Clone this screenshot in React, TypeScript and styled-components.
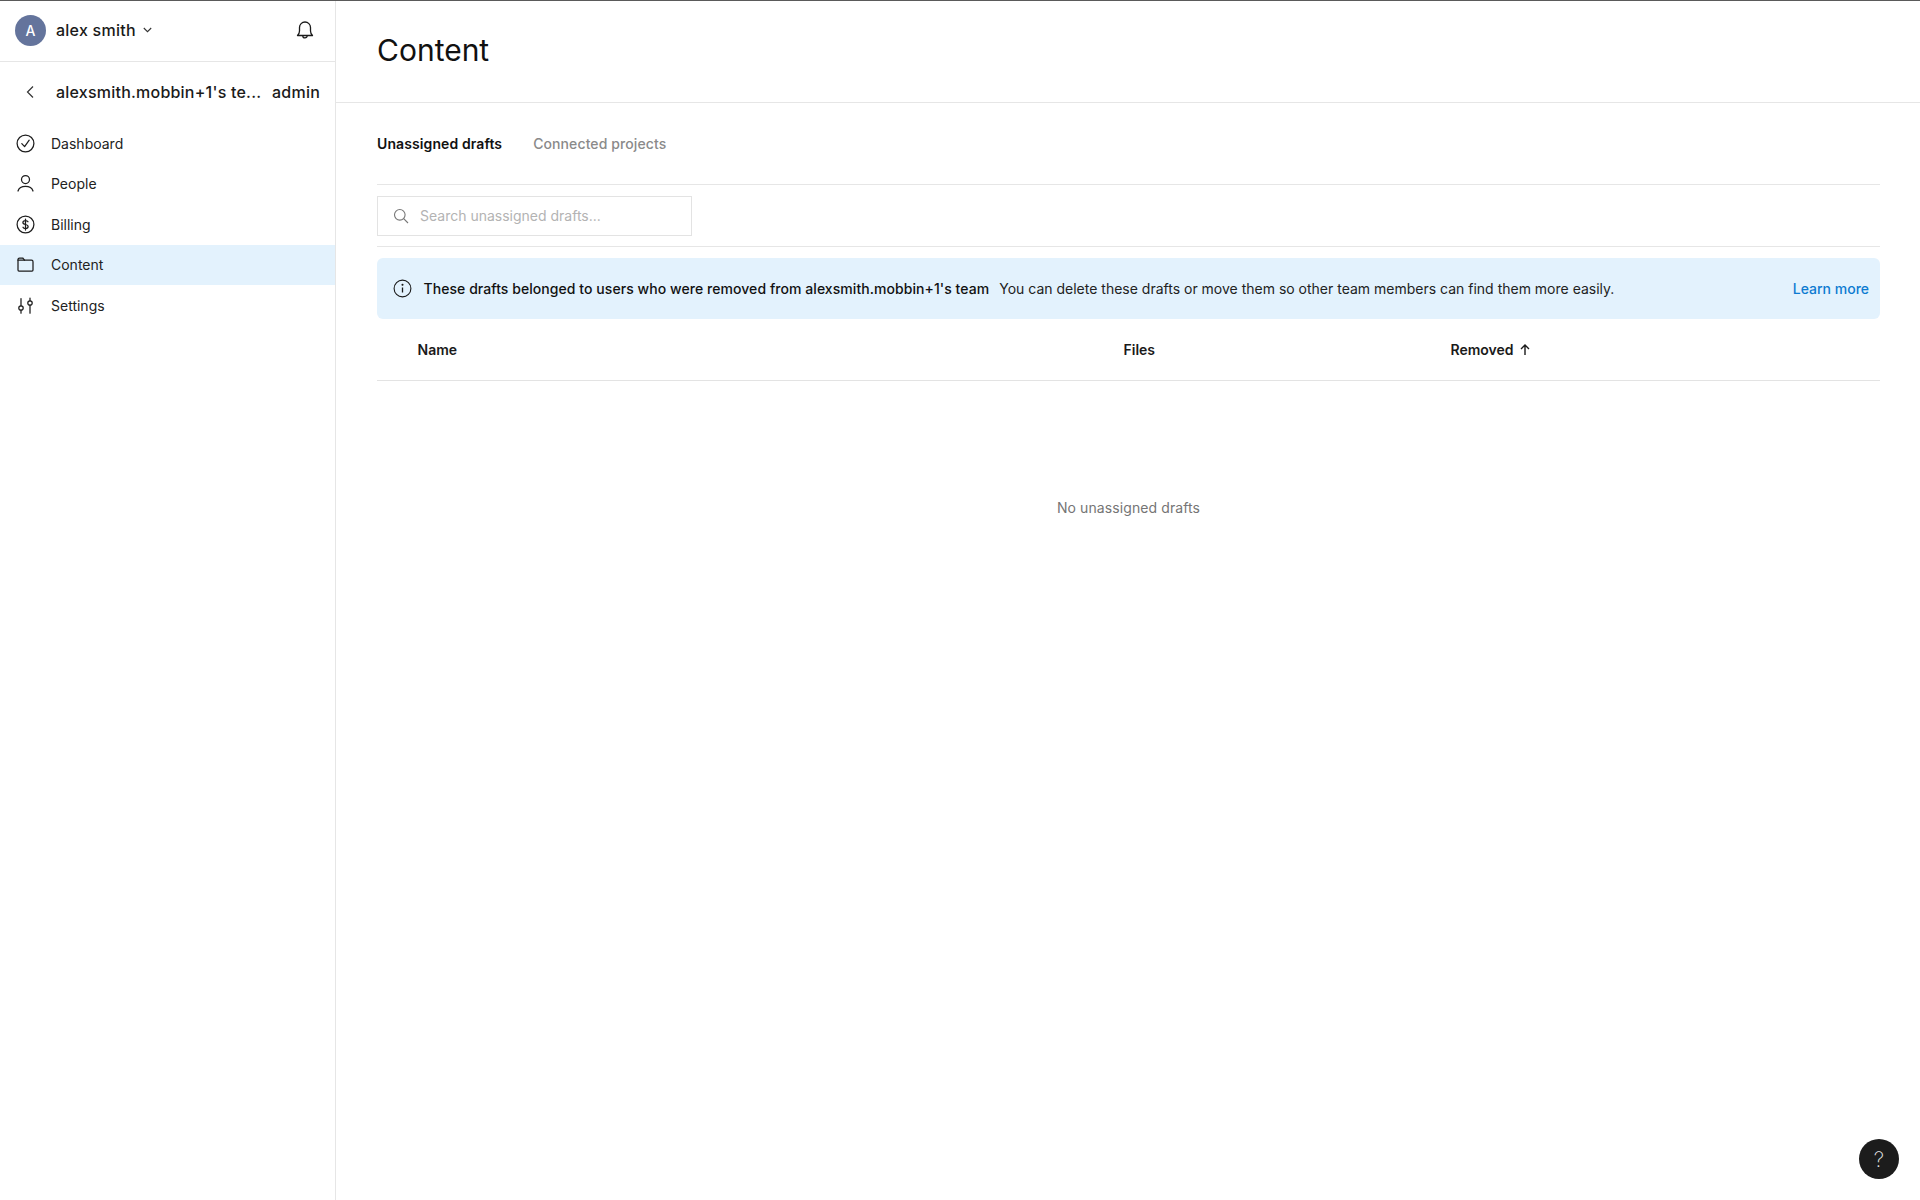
import React from "react";
import styled, { createGlobalStyle } from "styled-components";

const GlobalStyle = createGlobalStyle`
  html, body {
    margin: 0;
    padding: 0;
    background: #fff;
    font-family: Inter, "Liberation Sans", sans-serif;
    color: #1a1a1a;
  }
  * { box-sizing: border-box; }
`;

const Page = styled.div`
  display: grid;
  grid-template-columns: 336px 1fr;
  height: 1200px;
  border-top: 1px solid #5a5a5a;
  overflow: hidden;
`;

const Side = styled.aside`
  border-right: 1px solid #e6e6e6;
  display: flex;
  flex-direction: column;
`;

const UserRow = styled.div`
  height: 61px;
  padding: 0 21px 2px 15px;
  display: flex;
  align-items: center;
  border-bottom: 1px solid #e6e6e6;
`;

const Avatar = styled.div`
  width: 31px;
  height: 31px;
  border-radius: 50%;
  background: #64749c;
  color: #fff;
  font-size: 14px;
  font-weight: 500;
  display: flex;
  align-items: center;
  justify-content: center;
  margin-right: 10px;
`;

const UserName = styled.span`
  font-size: 16px;
  font-weight: 500;
  letter-spacing: 0.25px;
  margin-right: 7px;
`;

const Bell = styled.div`
  margin-left: auto;
  display: flex;
`;

const TeamRow = styled.div`
  height: 61px;
  padding: 0 15px 1px 26px;
  display: flex;
  align-items: center;
  font-size: 16px;
  font-weight: 500;
  letter-spacing: 0.22px;
`;

const TeamName = styled.span`
  margin-left: 22px;
  white-space: nowrap;
`;

const TeamRole = styled.span`
  margin-left: auto;
`;

const Nav = styled.nav`
  display: flex;
  flex-direction: column;
`;

const NavItem = styled.div<{ $active?: boolean }>`
  height: 40.5px;
  padding: 0 0 0 16px;
  display: flex;
  align-items: center;
  gap: 16px;
  font-size: 14px;
  color: #222;
  background: ${(p) => (p.$active ? "#e3f2fd" : "transparent")};
`;

const NavIcon = styled.svg`
  width: 19px;
  height: 19px;
  fill: none;
  stroke: #1e1e1e;
  stroke-width: 1.25;
  stroke-linecap: round;
  stroke-linejoin: round;
  flex: none;
`;

const Main = styled.main`
  display: flex;
  flex-direction: column;
  min-width: 0;
`;

const Header = styled.header`
  height: 102px;
  padding: 0 40px 0 41px;
  display: flex;
  align-items: center;
  border-bottom: 1px solid #e6e6e6;
`;

const Title = styled.h1`
  margin: 0 0 3px;
  font-size: 30px;
  font-weight: 400;
  color: #111;
`;

const Body = styled.div`
  padding: 0 40px 0 41px;
  display: flex;
  flex-direction: column;
`;

const Tabs = styled.div`
  height: 82px;
  display: flex;
  align-items: center;
  gap: 31px;
  border-bottom: 1px solid #e6e6e6;
`;

const Tab = styled.span<{ $active?: boolean }>`
  font-size: 14px;
  letter-spacing: 0.1px;
  font-weight: ${(p) => (p.$active ? 600 : 500)};
  color: ${(p) => (p.$active ? "#111" : "#8a8a8a")};
`;

const SearchRow = styled.div`
  height: 62px;
  padding-top: 1px;
  display: flex;
  align-items: center;
  border-bottom: 1px solid #e6e6e6;
`;

const SearchBox = styled.div`
  width: 315px;
  height: 40px;
  border: 1px solid #e3e3e3;
  display: flex;
  align-items: center;
  padding: 0 0 1px 15px;
  gap: 11px;
  font-size: 14px;
  color: #b3b3b3;
`;

const Banner = styled.div`
  height: 61px;
  margin-top: 11px;
  padding: 0 11px 1px 16px;
  display: flex;
  align-items: center;
  background: #e3f2fd;
  border-radius: 6px;
  font-size: 14px;
  color: #222;
`;

const BannerStrong = styled.span`
  margin-left: 11.5px;
  font-weight: 500;
  letter-spacing: 0.06px;
  color: #111;
`;

const BannerText = styled.span`
  margin-left: 10px;
`;

const LearnMore = styled.a`
  margin-left: auto;
  font-weight: 500;
  color: #0d7bd1;
`;

const TableHead = styled.div`
  height: 62px;
  display: grid;
  grid-template-columns: 706px 327px 1fr;
  align-items: center;
  padding: 0 0 1px 40.5px;
  border-bottom: 1px solid #e3e3e3;
  font-size: 14px;
  font-weight: 600;
  color: #1a1a1a;
`;

const HeadCell = styled.span`
  display: flex;
  align-items: center;
  gap: 6px;
`;

const Empty = styled.div`
  margin-top: 118px;
  text-align: center;
  font-size: 14px;
  letter-spacing: 0.1px;
  color: #757575;
`;

const HelpButton = styled.div`
  position: absolute;
  right: 21px;
  bottom: 21px;
  width: 40px;
  height: 40px;
  border-radius: 50%;
  background: #1c1c1c;
  color: #e8e8e8;
  font-size: 21px;
  font-weight: 200;
  display: flex;
  align-items: center;
  justify-content: center;
`;

const App: React.FC = () => {
  return (
    <>
      <GlobalStyle />
      <Page>
        <Side>
          <UserRow>
            <Avatar>A</Avatar>
            <UserName>alex smith</UserName>
            <svg width="9" height="6" viewBox="0 0 9 6" fill="none" stroke="#333" strokeWidth="1.1">
              <path d="M.8 1l3.700 3.700L8.200 1" />
            </svg>
            <Bell>
              <svg width="18" height="20" viewBox="0 0 18 20" fill="none" stroke="#1a1a1a" strokeWidth="1.3" strokeLinejoin="round">
                <path d="M1.500 15.500c1.300-1.300 2-2.600 2-4.500V7.500a5.500 5.500 0 0 1 11 0V11c0 1.900.7 3.200 2 4.500z" />
                <path d="M6.800 15.700a2.200 2.200 0 0 0 4.400 0" />
              </svg>
            </Bell>
          </UserRow>
          <TeamRow>
            <svg width="8" height="14" viewBox="0 0 8 14" fill="none" stroke="#333" strokeWidth="1.2">
              <path d="M7 1.500L1.500 7 7 12.500" />
            </svg>
            <TeamName>alexsmith.mobbin+1's te...</TeamName>
            <TeamRole>admin</TeamRole>
          </TeamRow>
          <Nav>
            <NavItem>
              <NavIcon viewBox="0 0 19 19">
                <circle cx="9.5" cy="9.5" r="8.4" />
                <path d="M5.800 9.600l2.800 3 4.600-6.400" />
              </NavIcon>
              Dashboard
            </NavItem>
            <NavItem>
              <NavIcon viewBox="0 0 19 19">
                <circle cx="9.5" cy="5.5" r="4" />
                <path d="M2 17c1-3.200 4-4.600 7.500-4.600S16 13.800 17 17" />
              </NavIcon>
              People
            </NavItem>
            <NavItem>
              <NavIcon viewBox="0 0 19 19">
                <circle cx="9.5" cy="9.5" r="8.4" />
                <path d="M12 6.800c-.4-.9-1.300-1.300-2.500-1.300-1.500 0-2.600.7-2.600 2s1.100 1.700 2.600 2 2.600.7 2.600 2-1.100 2-2.600 2c-1.200 0-2.100-.4-2.500-1.300M9.500 4v11" />
              </NavIcon>
              Billing
            </NavItem>
            <NavItem $active>
              <NavIcon viewBox="0 0 19 19">
                <path d="M2 4.500A1.500 1.500 0 0 1 3.500 3h3.200l1.800 2.200h7A1.500 1.500 0 0 1 17 6.700v8.300a1 1 0 0 1-1 1H3a1 1 0 0 1-1-1z" />
                <path d="M2 5.200h6.500" />
              </NavIcon>
              Content
            </NavItem>
            <NavItem>
              <NavIcon viewBox="0 0 19 19">
                <circle cx="5" cy="12" r="2.200" />
                <circle cx="14" cy="7" r="2.200" />
                <path d="M5 2.500v7.300M5 14.200v3M14 2v2.800M14 9.200v8" />
              </NavIcon>
              Settings
            </NavItem>
          </Nav>
        </Side>
        <Main>
          <Header>
            <Title>Content</Title>
          </Header>
          <Body>
            <Tabs>
              <Tab $active>Unassigned drafts</Tab>
              <Tab>Connected projects</Tab>
            </Tabs>
            <SearchRow>
              <SearchBox>
                <svg width="16" height="16" viewBox="0 0 16 16" fill="none" stroke="#777" strokeWidth="1.1">
                  <circle cx="6.800" cy="6.800" r="5.300" />
                  <path d="M10.700 10.700L15 15" />
                </svg>
                Search unassigned drafts...
              </SearchBox>
            </SearchRow>
            <Banner>
              <svg width="19" height="19" viewBox="0 0 19 19" fill="none" stroke="#1a1a1a" strokeWidth="1.1">
                <circle cx="9.500" cy="9.500" r="8.400" />
                <path d="M9.500 8.500v5" strokeWidth="1.300" />
                <circle cx="9.500" cy="5.800" r=".5" fill="#1a1a1a" />
              </svg>
              <BannerStrong>These drafts belonged to users who were removed from alexsmith.mobbin+1's team</BannerStrong>
              <BannerText>You can delete these drafts or move them so other team members can find them more easily.</BannerText>
              <LearnMore>Learn more</LearnMore>
            </Banner>
            <TableHead>
              <HeadCell>Name</HeadCell>
              <HeadCell>Files</HeadCell>
              <HeadCell>
                Removed
                <svg width="10" height="11" viewBox="0 0 10 11" fill="none" stroke="#1a1a1a" strokeWidth="1.4">
                  <path d="M5 11V1.500M1 5l4-4 4 4" />
                </svg>
              </HeadCell>
            </TableHead>
            <Empty>No unassigned drafts</Empty>
          </Body>
        </Main>
        <HelpButton>?</HelpButton>
      </Page>
    </>
  );
};

export default App;
